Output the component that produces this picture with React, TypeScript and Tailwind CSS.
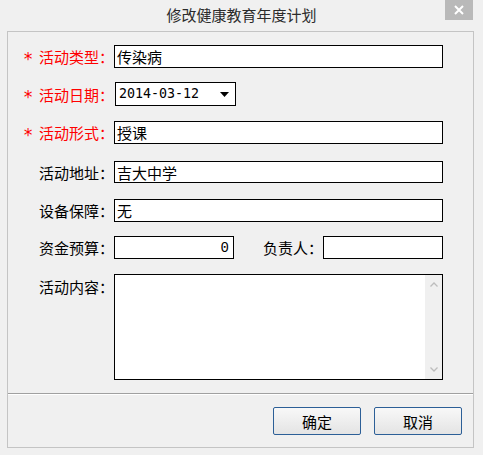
import React from 'react';

const FONT = "font-['Noto_Sans_CJK_SC','Microsoft_YaHei',sans-serif]";

interface RowLabelProps {
  text: string;
  required?: boolean;
}

const RowLabel = ({ text, required }: RowLabelProps) => (
  <div className="w-[106px] shrink-0 flex items-center pl-[15px] whitespace-nowrap">
    <span className="w-[18px] text-[17px] leading-none text-[#ff0000] font-['DejaVu_Sans_Mono',monospace] translate-y-[3px]">
      {required ? '*' : ''}
    </span>
    <span className={`text-[15px] leading-none ${required ? 'text-[#ff0000]' : 'text-black'}`}>{text}</span>
  </div>
);

const TextBox = ({ value, className = '' }: { value: string; className?: string }) => (
  <div
    className={`h-full border border-black bg-white flex items-center px-[2px] text-[15px] leading-none whitespace-nowrap ${className}`}
  >
    {value}
  </div>
);

export default function App() {
  return (
    <div className={`w-[483px] h-[455px] bg-[#f0f0f0] flex flex-col text-black overflow-hidden ${FONT}`}>
      {/* Title bar */}
      <div className="relative h-[31px] shrink-0 flex items-center justify-center text-[15px] text-[#2b2b2b]">
        修改健康教育年度计划
        <div className="absolute right-[10px] top-0 w-[28px] h-[20px] bg-[#b9b9b9] flex items-center justify-center">
          <svg width="10" height="10" viewBox="0 0 10 10">
            <path d="M1 1L9 9M9 1L1 9" stroke="#fff" strokeWidth="2" />
          </svg>
        </div>
      </div>

      {/* Client area */}
      <div className="ml-[7px] w-[467px] h-[417px] border border-[#c4c4c4] flex flex-col">
        <div className="h-[362px] shrink-0 border-b border-[#a0a0a0] flex flex-col">
          <div className="flex items-center h-[23px] mt-[13px]">
            <RowLabel text="活动类型：" required />
            <TextBox value="传染病" className="w-[329px]" />
          </div>

          <div className="flex items-center h-[24px] mt-[14px]">
            <RowLabel text="活动日期：" required />
            <div className="ml-[1px] w-[121px] h-full border border-black bg-white flex items-center justify-between pl-[3px] pr-[6px]">
              <span className="font-['DejaVu_Sans_Mono',monospace] text-[13.3px] leading-none">2014-03-12</span>
              <svg width="9" height="5" viewBox="0 0 9 5">
                <path d="M0 0H9L4.5 5Z" fill="#000" />
              </svg>
            </div>
          </div>

          <div className="flex items-center h-[23px] mt-[15px]">
            <RowLabel text="活动形式：" required />
            <TextBox value="授课" className="w-[329px]" />
          </div>

          <div className="flex items-center h-[22px] mt-[17px]">
            <RowLabel text="活动地址：" />
            <TextBox value="吉大中学" className="w-[329px]" />
          </div>

          <div className="flex items-center h-[23px] mt-[16px]">
            <RowLabel text="设备保障：" />
            <TextBox value="无" className="w-[329px]" />
          </div>

          <div className="flex items-center h-[23px] mt-[14px]">
            <RowLabel text="资金预算：" />
            <div className="w-[120px] h-full border border-black bg-white flex items-center justify-end pr-[4px] font-['Liberation_Mono',monospace] text-[14px] leading-none">
              0
            </div>
            <div className="ml-[29px] w-[60px] shrink-0 text-[15px] leading-none whitespace-nowrap">负责人：</div>
            <TextBox value="" className="w-[120px]" />
          </div>

          <div className="flex items-start h-[106px] mt-[15px]">
            <div className="pt-[5px]">
              <RowLabel text="活动内容：" />
            </div>
            <div className="w-[329px] h-full border border-black bg-white flex justify-end">
              <div className="w-[17px] h-full bg-[#f0f0f0] flex flex-col items-center justify-between py-[7px]">
                <svg width="8" height="5" viewBox="0 0 8 5">
                  <path d="M0.5 4.5L4 1L7.5 4.5" stroke="#bdbdbd" strokeWidth="1.3" fill="none" />
                </svg>
                <svg width="8" height="5" viewBox="0 0 8 5">
                  <path d="M0.5 0.5L4 4L7.5 0.5" stroke="#bdbdbd" strokeWidth="1.3" fill="none" />
                </svg>
              </div>
            </div>
          </div>
        </div>

        {/* Buttons */}
        <div className="flex-1 border-t border-white flex justify-end items-start pt-[12px] pr-[11px] gap-[13px]">
          <button className="w-[88px] h-[28px] rounded-[2px] border border-[#2c5f97] bg-gradient-to-b from-[#f8f8f8] to-[#e4e4e4] text-[15px] leading-none flex items-center justify-center">
            确定
          </button>
          <button className="w-[88px] h-[28px] rounded-[2px] border border-[#2c5f97] bg-gradient-to-b from-[#f8f8f8] to-[#e4e4e4] text-[15px] leading-none flex items-center justify-center">
            取消
          </button>
        </div>
      </div>
    </div>
  );
}
